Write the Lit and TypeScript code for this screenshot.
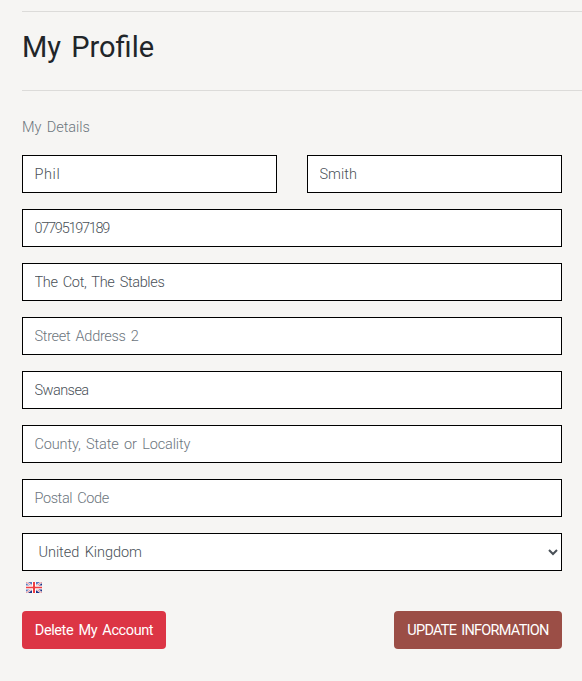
import { LitElement, html, css, svg } from "lit";
import { customElement } from "lit/decorators.js";
import { styleMap } from "lit/directives/style-map.js";

interface Field {
  value?: string;
  placeholder?: string;
  tracking: number;
}

const names: Field[] = [
  { value: "Phil", tracking: 0.6 },
  { value: "Smith", tracking: 0 },
];

const details: Field[] = [
  { value: "07795197189", tracking: -1.26 },
  { value: "The Cot, The Stables", tracking: -0.34 },
  { placeholder: "Street Address 2", tracking: -0.3 },
  { value: "Swansea", tracking: -0.55 },
  { placeholder: "County, State or Locality", tracking: -0.13 },
  { placeholder: "Postal Code", tracking: -0.4 },
];

@customElement("flag-gb")
export class FlagGb extends LitElement {
  static styles = css`
    :host { display: block; width: 16px; height: 11px; }
    svg { display: block; }
  `;
  render() {
    return html`<svg width="16" height="11" viewBox="0 0 16 11">
      ${svg`
        <rect width="16" height="11" fill="#1c3384"/>
        <path d="M0 0H16L0 11Z" fill="#5b78bd"/>
        <path d="M0 0L16 11M16 0L0 11" stroke="#f4f2f6" stroke-width="2.2"/>
        <path d="M0 0L16 11M16 0L0 11" stroke="#e2757c" stroke-width="0.8"/>
        <path d="M8 0V11M0 5.5H16" stroke="#fff" stroke-width="4"/>
        <path d="M8 0V11" stroke="#ee3f43" stroke-width="2"/>
        <path d="M0 5.5H16" stroke="#ee3f43" stroke-width="1.6"/>
      `}
    </svg>`;
  }
}

@customElement("app-root")
export class AppRoot extends LitElement {
  static styles = css`
    :host {
      display: block;
      box-sizing: border-box;
      height: 681px;
      padding: 11px 0 0 22px;
      overflow: hidden;
      background: #f6f5f3;
      color: #212529;
      font-family: Roboto, "Noto Sans", sans-serif;
      font-size: 14.5px;
      font-weight: 300;
    }
    * { box-sizing: border-box; }
    header {
      height: 80px;
      padding-top: 16px;
      border-top: 1px solid #dcdbd9;
      border-bottom: 1px solid #dcdbd9;
    }
    h1 {
      margin: 0;
      font-size: 29px;
      font-weight: 400;
      line-height: 38px;
      word-spacing: 3px;
    }
    .caption {
      margin: 25px 0 15px;
      line-height: 24px;
      color: #6c757d;
      letter-spacing: -0.05px;
      word-spacing: 2px;
    }
    form { width: 540px; }
    .names {
      display: grid;
      grid-template-columns: 1fr 1fr;
      gap: 30px;
      margin-bottom: 16px;
    }
    .details { display: grid; gap: 16px; }
    input, select {
      display: block;
      width: 100%;
      min-width: 0;
      height: 38px;
      margin: 0;
      padding: 6px 12px 6px 11.5px;
      border: 1px solid #000;
      border-radius: 0;
      outline: 0;
      background: #fff;
      color: #495057;
      font: inherit;
      word-spacing: 2px;
    }
    select { padding-left: 11.5px; padding-right: 0; letter-spacing: -0.05px; }
    input::placeholder { color: #6c757d; opacity: 1; }
    flag-gb { margin: 11px 0 18px 4px; }
    .actions { display: flex; justify-content: space-between; }
    button {
      height: 38px;
      padding: 0;
      border: 0;
      border-radius: 4px;
      color: #fff;
      font: inherit;
      font-weight: 400;
      word-spacing: 2px;
    }
    .delete { width: 144px; background: #dc3545; letter-spacing: -0.4px; }
    .update { width: 168px; background: #9b4e46; letter-spacing: -0.72px; }
  `;

  private field(f: Field) {
    return html`<input
      type="text"
      style=${styleMap({ letterSpacing: `${f.tracking}px` })}
      .value=${f.value ?? ""}
      placeholder=${f.placeholder ?? ""}
    />`;
  }

  render() {
    return html`
      <header><h1>My Profile</h1></header>
      <p class="caption">My Details</p>
      <form>
        <div class="names">${names.map((f) => this.field(f))}</div>
        <div class="details">
          ${details.map((f) => this.field(f))}
          <select><option>United Kingdom</option></select>
        </div>
        <flag-gb></flag-gb>
        <div class="actions">
          <button type="button" class="delete">Delete My Account</button>
          <button type="button" class="update">UPDATE INFORMATION</button>
        </div>
      </form>
    `;
  }
}
